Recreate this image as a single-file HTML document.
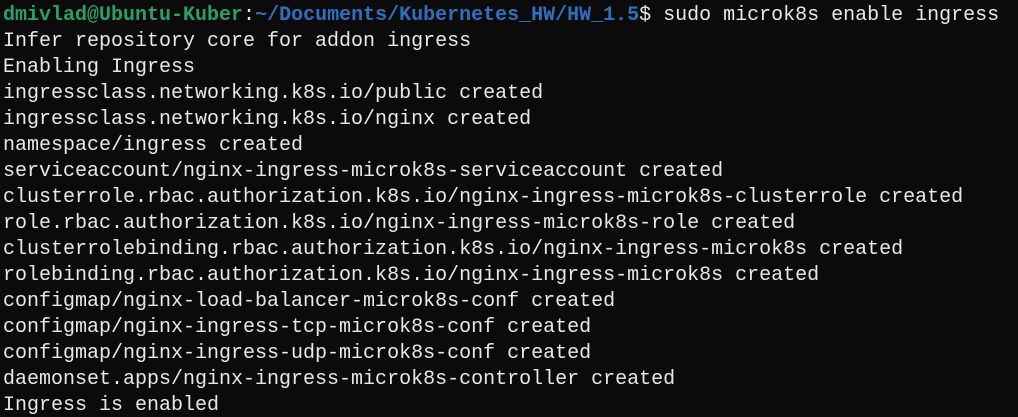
<!DOCTYPE html>
<html><head><style>
html,body{margin:0;padding:0;background:#0b0b0b;width:1018px;height:417px;overflow:hidden}
pre{margin:0;padding:3px 0 0 3px;font-family:"Liberation Mono","DejaVu Sans Mono",monospace;font-size:20px;line-height:26px;color:#e8e8e8;white-space:pre}
.g{color:#26a269;font-weight:bold}.b{color:#2f6fc0;font-weight:bold}
</style></head><body><pre><span class="g">dmivlad@Ubuntu-Kuber</span>:<span class="b">~/Documents/Kubernetes_HW/HW_1.5</span>$ sudo microk8s enable ingress
Infer repository core for addon ingress
Enabling Ingress
ingressclass.networking.k8s.io/public created
ingressclass.networking.k8s.io/nginx created
namespace/ingress created
serviceaccount/nginx-ingress-microk8s-serviceaccount created
clusterrole.rbac.authorization.k8s.io/nginx-ingress-microk8s-clusterrole created
role.rbac.authorization.k8s.io/nginx-ingress-microk8s-role created
clusterrolebinding.rbac.authorization.k8s.io/nginx-ingress-microk8s created
rolebinding.rbac.authorization.k8s.io/nginx-ingress-microk8s created
configmap/nginx-load-balancer-microk8s-conf created
configmap/nginx-ingress-tcp-microk8s-conf created
configmap/nginx-ingress-udp-microk8s-conf created
daemonset.apps/nginx-ingress-microk8s-controller created
Ingress is enabled</pre></body></html>
